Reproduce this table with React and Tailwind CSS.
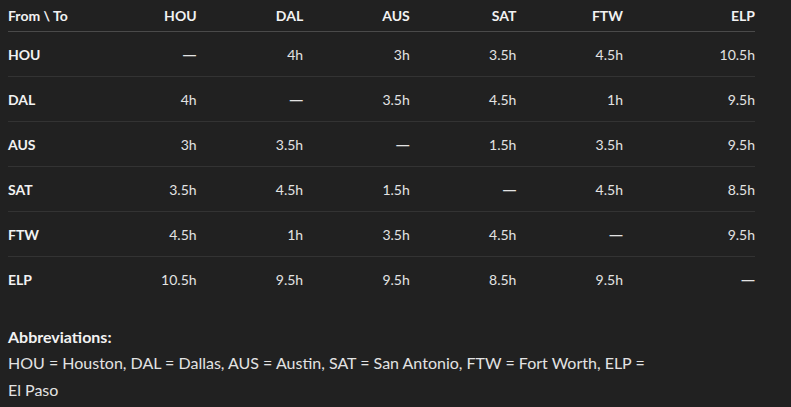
const cities = ['HOU', 'DAL', 'AUS', 'SAT', 'FTW', 'ELP']

const times = [
  ['—', '4h', '3h', '3.5h', '4.5h', '10.5h'],
  ['4h', '—', '3.5h', '4.5h', '1h', '9.5h'],
  ['3h', '3.5h', '—', '1.5h', '3.5h', '9.5h'],
  ['3.5h', '4.5h', '1.5h', '—', '4.5h', '8.5h'],
  ['4.5h', '1h', '3.5h', '4.5h', '—', '9.5h'],
  ['10.5h', '9.5h', '9.5h', '8.5h', '9.5h', '—'],
]

const cols = 'grid grid-cols-[82px_repeat(5,106.6px)_1fr] items-center'

export default function App() {
  return (
    <div className="min-h-screen bg-[#212121] px-2 font-['Lato',sans-serif] text-[#e3e3e3]">
      <div className="w-[747px] text-[14px]">
        <div className={`${cols} h-[32px] border-b border-[#4a4a4a] pb-px font-bold text-[#f2f2f2]`}>
          <div>From \ To</div>
          {cities.map((c) => (
            <div key={c} className="text-right">{c}</div>
          ))}
        </div>
        {times.map((row, i) => (
          <div
            key={cities[i]}
            className={`${cols} h-[45px] ${i < times.length - 1 ? 'border-b border-[#333333]' : ''}`}
          >
            <div className="font-bold text-[#f2f2f2]">{cities[i]}</div>
            {row.map((t, j) => (
              <div key={j} className="text-right">
                {t === '—' ? <span className="font-['Noto_Sans',sans-serif]">—</span> : t}
              </div>
            ))}
          </div>
        ))}
      </div>

      <div className="mt-[23px] w-[650px] text-[16px]">
        <div className="font-bold leading-[24px] text-[#f2f2f2]">Abbreviations:</div>
        <p className="leading-[27px]">
          HOU = Houston, DAL = Dallas, AUS = Austin, SAT = San Antonio, FTW = Fort Worth, ELP = El Paso
        </p>
      </div>
    </div>
  )
}
